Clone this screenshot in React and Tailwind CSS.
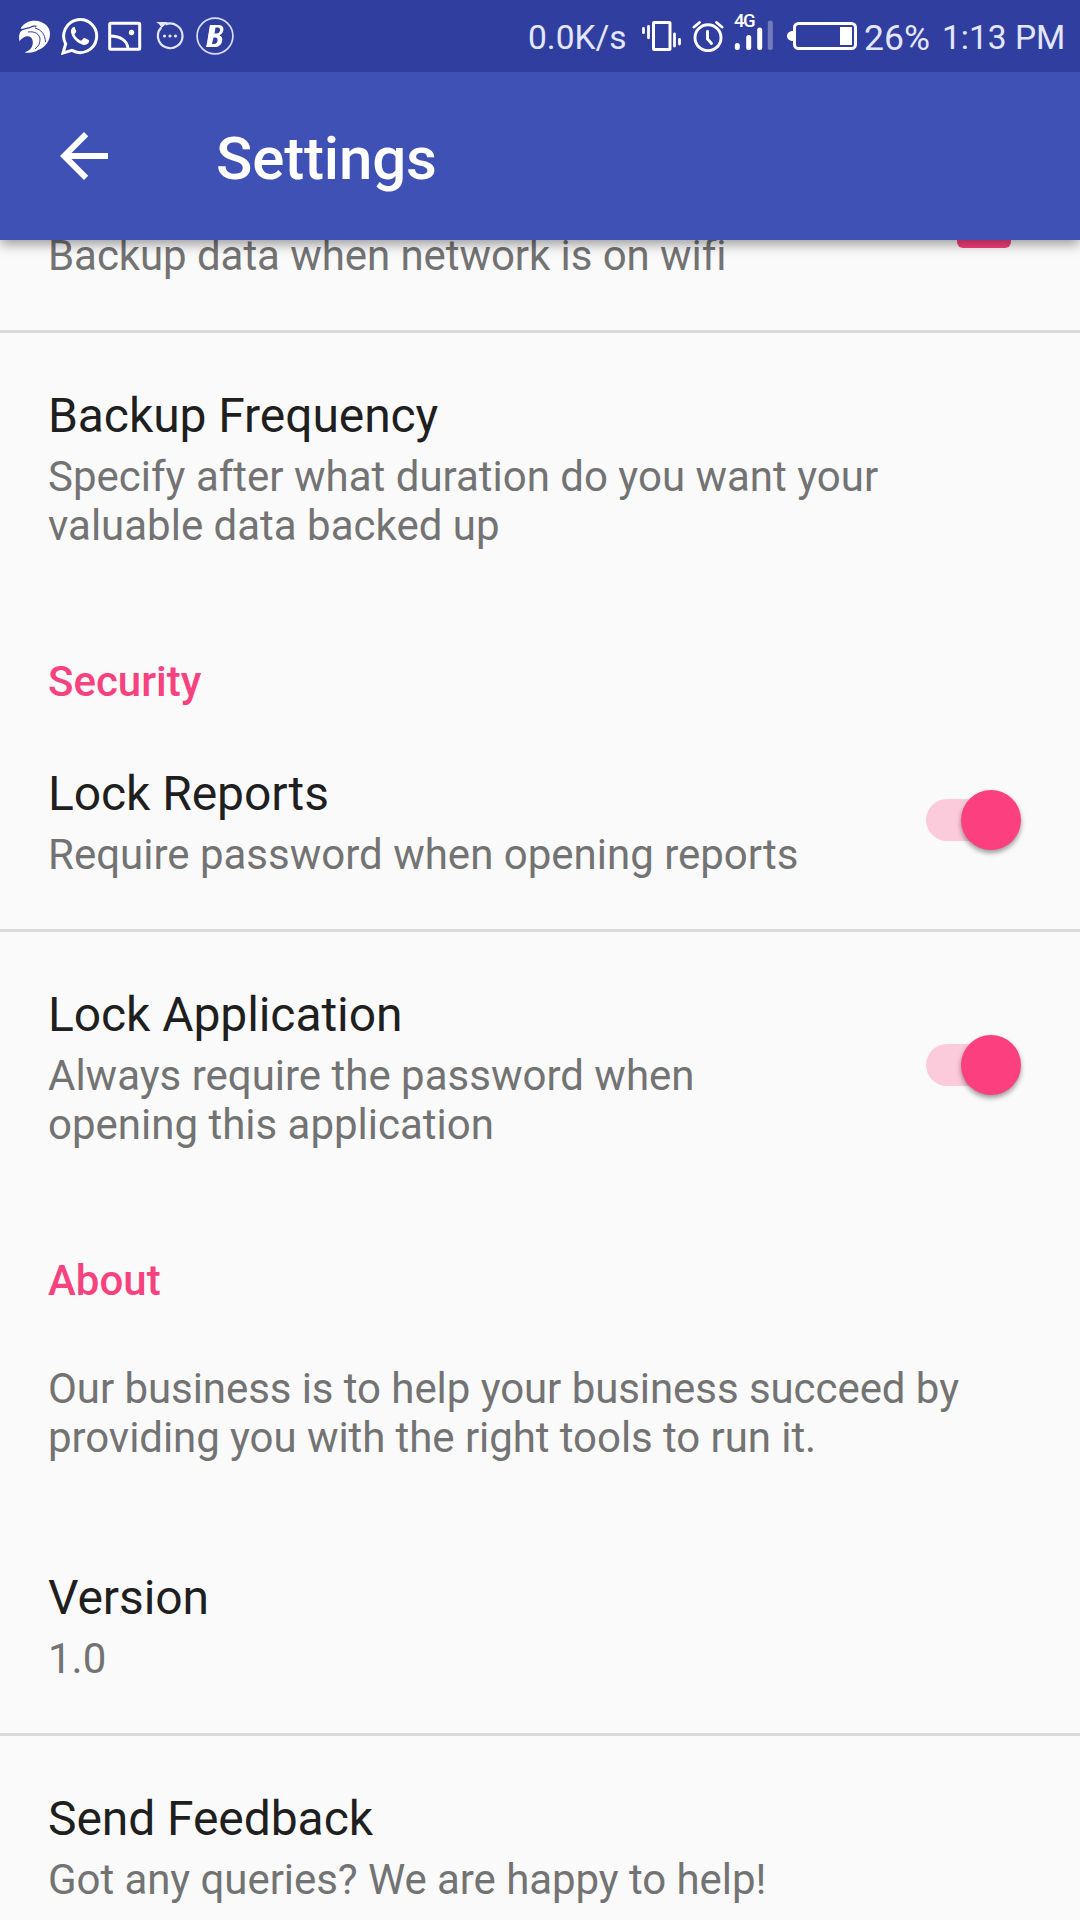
import React from "react";

const EagleIcon = () => (
  <svg className="ml-[18px] h-[34px] w-[34px] shrink-0" viewBox="0 0 34 34" fill="#fff">
    <path d="M2.500 9.500C6 4 11 1.500 17 1.700c9 .3 15 6 15 12.800 0 8-5 14-12 16.500-3.500 2.500-9 3.500-13.500 2.200 3-.6 5.500-2.200 7-4.700 2-3.500 1.800-8-.8-10.200-2.700-2.300-7.500-1-11.200 4C.3 16.500 1.500 12.500 5 10z" />
    <path d="M1 12.500c4.500-3.700 8-2.500 11.500-4.300 1.800-1 3.800-1.300 6-.8" fill="none" stroke="#303f9f" strokeWidth="1.200" />
    <path d="M10 13c7-1 11.500 2 12 7 .3 4-1.500 7.500-5 10M17 9c6 1.500 10 6 10.500 14" fill="none" stroke="#303f9f" strokeWidth="1" />
  </svg>
);

const WhatsAppIcon = () => (
  <svg className="ml-[9px] h-[38px] w-[38px] shrink-0" viewBox="0 0 38 38">
    <path d="M2 36l2.700-9A16.500 16.500 0 1 1 11 33.400z" fill="none" stroke="#fff" strokeWidth="3" />
    <path d="M13.600 10c-.7-.3-1.500 0-2 .6-1.500 1.500-2 3.500-1.400 5.500 1.500 5.500 6 10 11.500 11.600 2.500.6 5-.3 6-2.300.6-1.200.6-2-.1-2.400l-3.800-1.900c-.7-.3-1.100-.1-1.600.5l-1.400 1.700c-.4.4-.8.400-1.400.1-2.600-1.200-4.400-3-5.700-5.300-.3-.6-.2-.9.200-1.300l1.100-1.500c.3-.4.3-.8.1-1.300z" fill="#fff" />
  </svg>
);

const GalleryIcon = () => (
  <svg className="ml-[9px] h-[30px] w-[34px] shrink-0" viewBox="0 0 34 30" fill="none" stroke="#fff" strokeWidth="3">
    <rect x="1.700" y="2.200" width="30" height="26" rx="1" />
    <path d="M2 15c10 0 18 4.500 18 13.500" />
    <circle cx="23.500" cy="11.500" r="2.700" fill="#fff" stroke="none" />
  </svg>
);

const ChatIcon = () => (
  <svg className="ml-[14px] h-[30px] w-[30px] shrink-0" viewBox="0 0 30 30" fill="none" stroke="#e4e6fb" strokeWidth="2.200">
    <path d="M5.200 6.500A12.300 12.300 0 1 0 9.500 3.500" />
    <path d="M0 1h12L5.500 7C4 4 3 2.500 0 1z" fill="#e4e6fb" stroke="none" />
    <g fill="#e4e6fb" stroke="none">
      <circle cx="8.500" cy="15" r="1.600" />
      <circle cx="14" cy="15" r="1.600" />
      <circle cx="19.500" cy="15" r="1.600" />
    </g>
  </svg>
);

const BadgeBIcon = () => (
  <svg className="ml-[10px] h-[38px] w-[38px] shrink-0" viewBox="0 0 38 38">
    <circle cx="19" cy="19" r="17.900" fill="none" stroke="#d9dcf7" strokeWidth="1.700" />
    <path fillRule="evenodd" fill="#fff" d="M14 8h8.500c4 0 5.500 2.500 4.800 5.500-.5 2.500-2 4-3.800 4.800 2.500 1 3.200 3 2.600 5.700-.8 4-3.500 6-7.600 6H10l1-4zM19.500 10.500l-1 6h2c2 0 3.200-1.200 3.500-3 .3-2-.5-3-2-3zm-2 10L16 27h2c2 0 3.200-1 3.500-3.300.3-2.200-.5-3.200-2.200-3.200z" />
    <path d="M15.500 9l-3 20" stroke="#fff" strokeWidth="3" />
  </svg>
);

const VibrateIcon = () => (
  <svg className="h-[30px] w-[40px]" viewBox="0 0 40 30" fill="none" stroke="#fff">
    <rect x="11.500" y="1.500" width="16.500" height="27" rx=".5" strokeWidth="3" />
    <path d="M1.500 7.300v4.400M6.500 5.500v11.300M32.500 13v12M37.500 18.500v4.500" strokeWidth="2.800" strokeLinecap="round" />
  </svg>
);

const AlarmIcon = () => (
  <svg className="h-[32px] w-[32px]" viewBox="0 0 32 32" fill="none" stroke="#fff" strokeWidth="2.900">
    <circle cx="16" cy="17.700" r="13" />
    <path d="M15.500 11.500v7.500l4 4.500" strokeLinecap="round" />
    <path d="M2 7l5.500-4.500M30 7l-5.500-4.500" strokeLinecap="round" />
  </svg>
);

const SignalIcon = () => (
  <div className="relative h-[40px] w-[39px]">
    <svg className="h-[40px] w-[39px]" viewBox="0 0 39 40" strokeWidth="5" strokeLinecap="round" stroke="#fff">
      <path d="M3.300 34.500v2M14.700 26.500v10M25.700 19v17.500" />
      <path d="M36.300 12v24.500" opacity=".32" />
    </svg>
    <span className="absolute top-0 left-0 text-[18.500px] leading-[20px] font-medium tracking-[-1.500px] whitespace-nowrap text-white">4G</span>
  </div>
);

const BatteryIcon = () => (
  <svg className="h-[30px] w-[71px]" viewBox="0 0 71 30">
    <path d="M6 10v10C3 20 0 18.500 0 15s3-5 6-5z" fill="#fff" />
    <rect x="7.500" y="2.500" width="61" height="25" rx="4" fill="none" stroke="#fff" strokeWidth="3" />
    <rect x="53" y="6" width="12" height="18" fill="#fff" />
  </svg>
);

const StatusBar = () => (
  <div className="relative z-20 flex h-[72px] items-center bg-[#303f9f] text-[33.500px] leading-[40px] text-[#e4e6fb]">
    <EagleIcon />
    <WhatsAppIcon />
    <GalleryIcon />
    <ChatIcon />
    <BadgeBIcon />
    <div className="ml-[294px] w-[100px] shrink-0 pt-[4px] whitespace-nowrap">0.0K/s</div>
    <div className="ml-[14px] flex shrink-0 items-center">
      <VibrateIcon />
      <div className="ml-[10px]"><AlarmIcon /></div>
      <div className="-mt-[10px] ml-[10px]"><SignalIcon /></div>
      <div className="ml-[14px]"><BatteryIcon /></div>
    </div>
    <div className="ml-[6px] w-[66px] shrink-0 pt-[4px] text-[35.500px] whitespace-nowrap">26%</div>
    <div className="ml-[12px] pt-[4px] whitespace-nowrap">1:13 PM</div>
  </div>
);

const AppBar = () => (
  <header className="relative z-10 flex h-[168px] shrink-0 items-center bg-[#3f51b5] shadow-[0_4px_12px_rgba(0,0,0,0.4)]">
    <svg className="ml-[48px] h-[72px] w-[72px]" viewBox="0 0 24 24" fill="#fff">
      <path d="M20 11H7.830l5.590-5.590L12 4l-8 8 8 8 1.410-1.410L7.830 13H20v-2z" />
    </svg>
    <h1 className="ml-[96px] pt-[5px] text-[60px] leading-[70px] font-medium tracking-[-0.150px] text-white">Settings</h1>
  </header>
);

const Switch = () => (
  <div className="mr-[59px] h-[61px] w-[95px] shrink-0">
    <div className="relative h-[60px]">
      <div className="absolute top-[9px] left-0 h-[42px] w-[91px] rounded-full bg-[#fbcadb]" />
      <div className="absolute top-0 right-0 h-[60px] w-[60px] rounded-full bg-[#fc3f7f] shadow-[0_3px_5px_rgba(0,0,0,0.38)]" />
    </div>
  </div>
);

const Divider = () => <div className="h-[3px] bg-[#dadada]" />;

const Summary = ({ children, tight }) => (
  <p className={tight ? "text-[42px] leading-[49px] tracking-[-0.065px] whitespace-nowrap text-[#737373]" : "text-[42px] leading-[49px] whitespace-nowrap text-[#737373]"}>
    {children}
  </p>
);

const Preference = ({ title, children, toggle, tight }) => (
  <div className="flex items-center justify-between pl-[48px]">
    <div className="pt-[54px] pb-[50px]">
      {title && <h3 className="h-[65px] pt-px text-[48px] leading-[56px] tracking-[-0.080px] text-[#1f1f1f]">{title}</h3>}
      <Summary tight={tight}>{children}</Summary>
    </div>
    {toggle && <Switch />}
  </div>
);

const Category = ({ children }) => (
  <h2 className="h-[111px] pt-[57px] pl-[48px] text-[42px] leading-[49px] font-medium text-[#f6437f]">{children}</h2>
);

export default function App() {
  return (
    <div className="flex h-[1920px] w-[1080px] flex-col overflow-hidden bg-[#fafafa] font-['Roboto',sans-serif]">
      <StatusBar />
      <AppBar />
      <main className="flex-1 overflow-hidden">
        <div className="flex h-[90px] items-start justify-between pl-[48px]">
          <div className="-mt-[9px]">
            <Summary tight>Backup data when network is on wifi</Summary>
          </div>
          <div className="mr-[69px] h-[8px] w-[54px] rounded-b-[6px] bg-[#fc3f7f]" />
        </div>
        <Divider />
        <Preference title="Backup Frequency">
          Specify after what duration do you want your<br />valuable data backed up
        </Preference>
        <Category>Security</Category>
        <Preference title="Lock Reports" toggle>Require password when opening reports</Preference>
        <Divider />
        <Preference title="Lock Application" toggle>
          Always require the password when<br />opening this application
        </Preference>
        <Category>About</Category>
        <div className="pb-[3px]">
          <Preference tight>
            Our business is to help your business succeed by<br />providing you with the right tools to run it.
          </Preference>
        </div>
        <Preference title="Version">1.0</Preference>
        <Divider />
        <Preference title="Send Feedback" tight>Got any queries? We are happy to help!</Preference>
      </main>
    </div>
  );
}
